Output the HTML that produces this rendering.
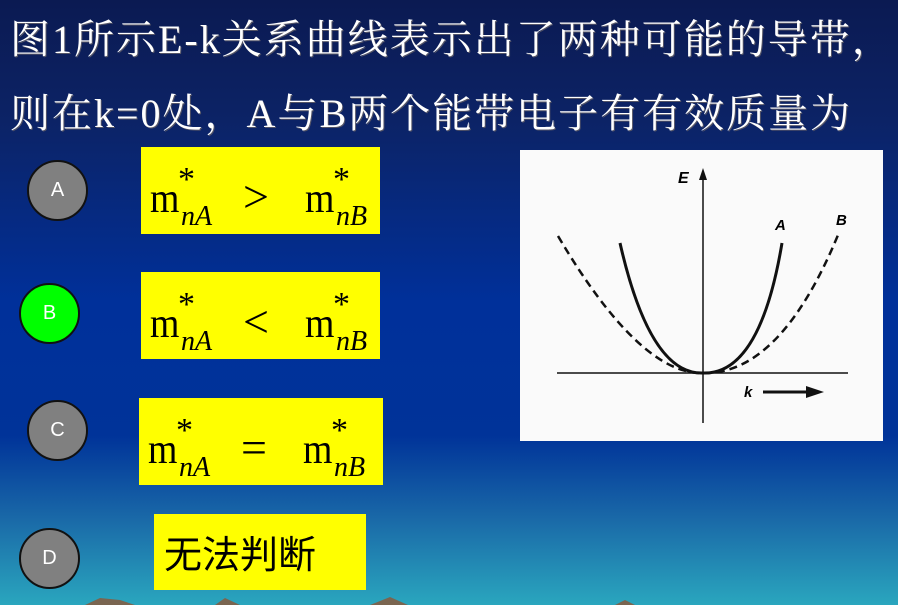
<!DOCTYPE html>
<html><head><meta charset="utf-8"><style>
body{margin:0;width:898px;height:605px;overflow:hidden;position:relative;
background:linear-gradient(180deg,#0b1a52 0%,#0c2366 20%,#00309a 50%,#003399 72%,#1a6aa8 86%,#2aa6be 100%);
font-family:"Liberation Serif","Noto Serif CJK SC",serif;}
.t{position:absolute;left:10px;color:#fff;font-size:40px;letter-spacing:2px;white-space:nowrap;text-shadow:1px 1px 0 #556;}
.y{position:absolute;background:#ff0;}
.c{position:absolute;border-radius:50%;background:#808080;border:2px solid #111;box-sizing:border-box;color:#fff;font:20px "Liberation Sans",sans-serif;display:flex;align-items:center;justify-content:center;}
</style></head><body>
<div class="t" style="top:8px">图1所示E-k关系曲线表示出了两种可能的导带，</div>
<div class="t" style="top:82px">则在k=0处，A与B两个能带电子有有效质量为</div>

<div class="c" style="left:27px;top:160px;width:61px;height:61px">A</div>
<div class="c" style="left:19px;top:283px;width:61px;height:61px;background:#00ff00">B</div>
<div class="c" style="left:27px;top:400px;width:61px;height:61px">C</div>
<div class="c" style="left:19px;top:528px;width:61px;height:61px">D</div>

<div class="y" style="left:141px;top:147px;width:239px;height:87px"></div>
<div class="y" style="left:141px;top:272px;width:239px;height:87px"></div>
<div class="y" style="left:139px;top:398px;width:244px;height:87px"></div>
<div class="y" style="left:154px;top:514px;width:212px;height:76px"></div>

<svg width="898" height="605" style="position:absolute;left:0;top:0" font-family="Liberation Serif,serif">
<g>
<text x="150" y="212" font-size="42" transform="translate(150 212) scale(0.9 1) translate(-150 -212)">m</text><text x="178" y="190" font-size="34">*</text><text x="181" y="225" font-size="28" font-style="italic">nA</text>
<text x="243" y="212" font-size="46">&gt;</text>
<text x="305" y="212" font-size="42" transform="translate(305 212) scale(0.9 1) translate(-305 -212)">m</text><text x="333" y="190" font-size="34">*</text><text x="336" y="225" font-size="28" font-style="italic">nB</text>
</g>
<g>
<text x="150" y="337" font-size="42" transform="translate(150 337) scale(0.9 1) translate(-150 -337)">m</text><text x="178" y="315" font-size="34">*</text><text x="181" y="350" font-size="28" font-style="italic">nA</text>
<text x="243" y="337" font-size="46">&lt;</text>
<text x="305" y="337" font-size="42" transform="translate(305 337) scale(0.9 1) translate(-305 -337)">m</text><text x="333" y="315" font-size="34">*</text><text x="336" y="350" font-size="28" font-style="italic">nB</text>
</g>
<g>
<text x="148" y="463" font-size="42" transform="translate(148 463) scale(0.9 1) translate(-148 -463)">m</text><text x="176" y="441" font-size="34">*</text><text x="179" y="476" font-size="28" font-style="italic">nA</text>
<text x="241" y="463" font-size="46">=</text>
<text x="303" y="463" font-size="42" transform="translate(303 463) scale(0.9 1) translate(-303 -463)">m</text><text x="331" y="441" font-size="34">*</text><text x="334" y="476" font-size="28" font-style="italic">nB</text>
</g>
<text x="164" y="568" font-size="38" font-family="Noto Sans CJK SC,sans-serif">无法判断</text>

<rect x="520" y="150" width="363" height="291" fill="#fafafa"/>
<line x1="703" y1="175" x2="703" y2="423" stroke="#111" stroke-width="1.5"/>
<polygon points="703,168 699,180 707,180" fill="#111"/>
<line x1="557" y1="373" x2="848" y2="373" stroke="#111" stroke-width="1.5"/>
<path d="M620,243 Q650,375 703,373 Q760,375 782,243" fill="none" stroke="#111" stroke-width="3"/>
<path d="M558,236 Q640,375 703,373 Q780,375 838,235" fill="none" stroke="#111" stroke-width="2.5" stroke-dasharray="8,5"/>
<text x="678" y="183" font-size="16" font-style="italic" font-weight="bold" font-family="Liberation Sans,sans-serif">E</text>
<text x="775" y="230" font-size="15" font-style="italic" font-weight="bold" font-family="Liberation Sans,sans-serif">A</text>
<text x="836" y="225" font-size="15" font-style="italic" font-weight="bold" font-family="Liberation Sans,sans-serif">B</text>
<text x="744" y="397" font-size="15" font-style="italic" font-weight="bold" font-family="Liberation Sans,sans-serif">k</text>
<line x1="763" y1="392" x2="810" y2="392" stroke="#111" stroke-width="3"/>
<polygon points="824,392 806,386 806,398" fill="#111"/>

<polygon points="85,605 100,598 120,600 135,605" fill="#7a6550"/>
<polygon points="215,605 225,598 240,605" fill="#7a6550"/>
<polygon points="370,605 390,597 408,605" fill="#7a6550"/>
<polygon points="615,605 625,600 635,605" fill="#7a6550"/>
</svg>
</body></html>
